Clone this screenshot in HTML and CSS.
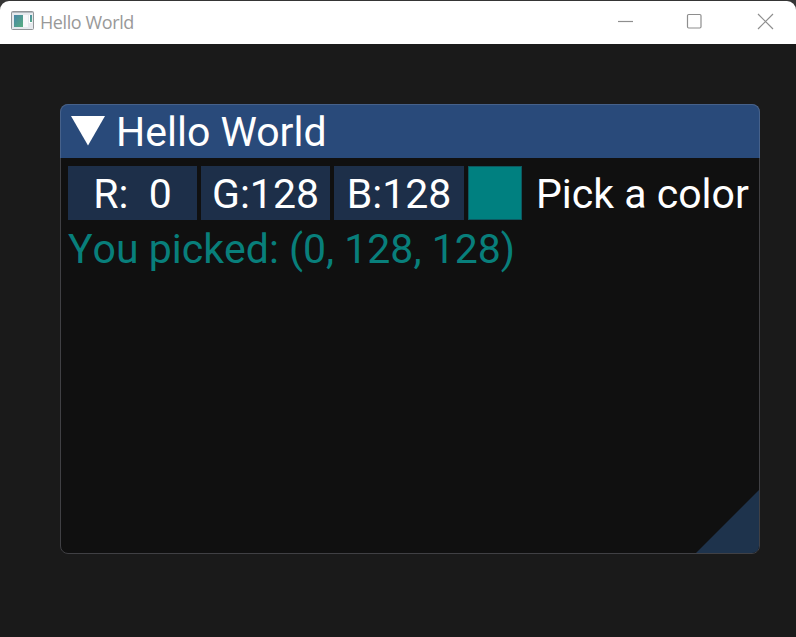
FILE: index.html
```
<!DOCTYPE html>
<html lang="en">
<head>
<meta charset="utf-8">
<title>Hello World</title>
<link rel="stylesheet" href="styles.css">
</head>
<body>
<div class="window">
  <header class="titlebar">
    <svg class="app-icon" width="24" height="20" viewBox="0 0 24 20">
      <defs>
        <linearGradient id="pane" x1="0" y1="0" x2="1" y2="1">
          <stop offset="0" stop-color="#4a86a8"/><stop offset="1" stop-color="#58ae80"/>
        </linearGradient>
      </defs>
      <rect x=".5" y=".5" width="22" height="18" rx="1" fill="#e6e9ed" stroke="#929598"/>
      <path d="M1 1.5H22" stroke="#b4bac0"/>
      <rect x="3" y="4" width="9" height="12" fill="url(#pane)"/>
      <rect x="12" y="4" width="5" height="12" fill="#f8f8fa"/>
      <rect x="18" y="4" width="3" height="8" fill="#fff"/>
      <rect x="19" y="4" width="2" height="7" fill="url(#pane)"/>
    </svg>
    <span class="caption">Hello World</span>
    <svg class="controls" width="160" height="20" viewBox="0 0 160 20">
      <path d="M0 10.5H15"/>
      <rect x="69.5" y="3.5" width="13.5" height="13.5" rx="1.2"/>
      <path d="M140 3L155 18M155 3L140 18"/>
    </svg>
  </header>
  <main class="canvas">
    <section class="panel">
      <div class="panel-title">
        <svg class="arrow" width="34" height="30" viewBox="0 0 34 30"><path d="M0 0H34L17 29.5Z" fill="#fff"/></svg>
        <span class="heading">Hello World</span>
      </div>
      <div class="panel-body">
        <div class="color-row">
          <span class="field red">R:&nbsp; 0</span>
          <span class="field green">G:128</span>
          <span class="field blue">B:128</span>
          <span class="swatch"></span>
          <span class="label">Pick a color</span>
        </div>
        <p class="picked">You picked: (0, 128, 128)</p>
      </div>
      <svg class="grip" width="63" height="63" viewBox="0 0 63 63"><path d="M63 0V63H0Z" fill="#1e334c"/></svg>
    </section>
  </main>
</div>
</body>
</html>
```
FILE: styles.css
```
* { box-sizing: border-box; }
body { margin: 0; background: #353535; }
.window {
  height: 637px;
  padding-top: 1px;
  display: flex;
  flex-direction: column;
  overflow: hidden;
}
.titlebar {
  height: 43px;
  flex: none;
  display: flex;
  align-items: flex-start;
  padding: 10px 18px 0 11px;
  background: #fff;
  border-radius: 9px 9px 0 0;
}
.app-icon { flex: none; }
.caption {
  margin: -1px auto 0 5px;
  font: 18px/24px "Open Sans", "Noto Sans", sans-serif;
  letter-spacing: -0.4px;
  color: #999;
  white-space: nowrap;
}
.controls { flex: none; fill: none; stroke: #8e8e8e; stroke-width: 1.2; }
.canvas {
  flex: 1;
  padding: 60px 36px 83px 60px;
  background: #1a1a1a;
}
.panel {
  position: relative;
  height: 450px;
  background: #101010;
  border: 1px solid #404044;
  border-radius: 8px;
  font: 41px/54px Roboto, sans-serif;
  color: #fff;
  white-space: nowrap;
}
.panel-title {
  height: 54px;
  margin: -1px -1px 0;
  padding-left: 10px;
  display: flex;
  background: #294a7a;
  border: 1px solid #46618a;
  border-bottom: 0;
  border-radius: 8px 8px 0 0;
}
.arrow { margin: 11px 11px 0 0; flex: none; }
.panel-body { padding: 8px 7px; line-height: 56px; }
.color-row { display: flex; height: 54px; }
.field {
  width: 129px;
  height: 54px;
  margin-right: 4px;
  background: #1d2f49;
  text-align: center;
  flex: none;
}
.blue { width: 130px; }
.swatch {
  width: 54px;
  height: 54px;
  flex: none;
  background: #008080;
  border: 1px solid #0d5860;
}
.label { margin-left: 14px; }
.picked { margin: 1px 0 0; color: #087f7b; font-kerning: none; }
.grip { position: absolute; right: 0; bottom: 0; border-radius: 0 0 7px 0; }
```
